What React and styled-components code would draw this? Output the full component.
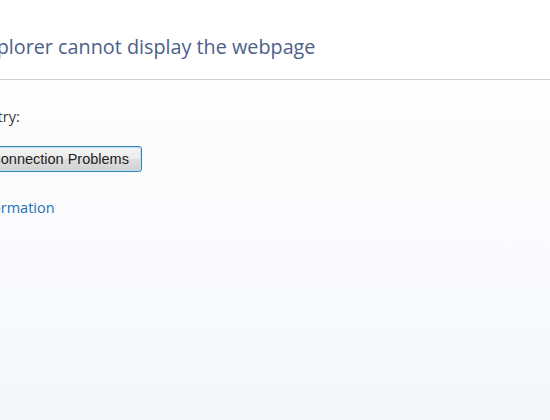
import React from "react";
import styled, { createGlobalStyle } from "styled-components";

const Global = createGlobalStyle`
  html, body { margin: 0; padding: 0; }
  body {
    font-family: "Open Sans", "Liberation Sans", sans-serif;
    overflow: hidden;
  }
`;

const Page = styled.div`
  width: 550px;
  height: 420px;
  overflow: hidden;
  background: linear-gradient(to bottom, #ffffff 0%, #fdfdfe 25%, #f9fafc 70%, #f5f6f9 100%);
`;

const Header = styled.div`
  height: 80px;
  box-sizing: border-box;
  border-bottom: 1px solid #cfd0d3;
  display: flex;
  align-items: flex-end;
  padding-bottom: 19px;
  background: #ffffff;
`;

const Title = styled.h1`
  margin: 0 0 0 ${(p) => p.$shift}px;
  font-size: 19.8px;
  font-weight: 400;
  color: #4c6088;
  white-space: nowrap;
  line-height: 26px;
`;

const Body = styled.div`
  display: flex;
  flex-direction: column;
  align-items: flex-start;
  padding-top: 28px;
`;

const Label = styled.div`
  margin-left: ${(p) => p.$shift}px;
  font-size: 14.5px;
  color: #3a3a3a;
  white-space: nowrap;
  line-height: 18px;
`;

const DiagnoseButton = styled.button`
  margin: 20px 0 0 ${(p) => p.$shift}px;
  height: 26px;
  padding: 0 12px 0 10px;
  border: 1px solid #3c7fb1;
  border-radius: 3px;
  box-shadow: inset 0 0 0 1px #b5e6f8;
  background: linear-gradient(to bottom, #f4f4f4 0%, #ececec 50%, #dedede 51%, #d2d2d2 100%);
  font-family: "Liberation Sans", Arial, sans-serif;
  font-size: 14.5px;
  color: #222222;
  white-space: nowrap;
  cursor: pointer;
`;

const MoreLink = styled.a`
  margin: 27px 0 0 ${(p) => p.$shift}px;
  font-size: 14.5px;
  color: #2272b6;
  text-decoration: none;
  white-space: nowrap;
  line-height: 18px;
`;

export default function App() {
  return (
    <>
      <Global />
      <Page>
        <Header>
          <Title $shift={-104}>Internet Explorer cannot display the webpage</Title>
        </Header>
        <Body>
          <Label $shift={-98}>What you can try:</Label>
          <DiagnoseButton $shift={-86}>Diagnose Connection Problems</DiagnoseButton>
          <MoreLink $shift={-65} href="#">More information</MoreLink>
        </Body>
      </Page>
    </>
  );
}
